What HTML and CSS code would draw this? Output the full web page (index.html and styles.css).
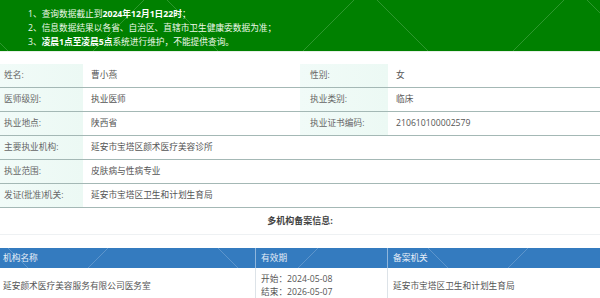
FILE: index.html
```html
<!DOCTYPE html>
<html lang="zh-CN">
<head>
<meta charset="utf-8">
<link rel="stylesheet" href="styles.css">
</head>
<body>
<div class="notice">
  <p>1、查询数据截止到<b>2024年12月1日22时</b>；</p>
  <p>2、信息数据结果以各省、自治区、直辖市卫生健康委数据为准；</p>
  <p>3、<b>凌晨1点至凌晨5点</b>系统进行维护，不能提供查询。</p>
</div>

<div class="info">
  <div class="lab">姓名:</div><div class="val">曹小燕</div>
  <div class="lab lab-r">性别:</div><div class="val">女</div>

  <div class="lab">医师级别:</div><div class="val">执业医师</div>
  <div class="lab lab-r">执业类别:</div><div class="val">临床</div>

  <div class="lab">执业地点:</div><div class="val">陕西省</div>
  <div class="lab lab-r">执业证书编码:</div><div class="val">210610100002579</div>

  <div class="lab">主要执业机构:</div><div class="val wide">延安市宝塔区颜术医疗美容诊所</div>
  <div class="lab">执业范围:</div><div class="val wide">皮肤病与性病专业</div>
  <div class="lab">发证(批准)机关:</div><div class="val wide">延安市宝塔区卫生和计划生育局</div>
</div>

<div class="subtitle">多机构备案信息:</div>

<div class="multi">
  <div class="head">
    <div class="hc c1">机构名称</div>
    <div class="hc c2">有效期</div>
    <div class="hc c3">备案机关</div>
  </div>
  <div class="row">
    <div class="dc c1">延安颜术医疗美容服务有限公司医务室</div>
    <div class="dc c2"><div>开始：2024-05-08</div><div>结束：2026-05-07</div></div>
    <div class="dc c3">延安市宝塔区卫生和计划生育局</div>
  </div>
</div>
</body>
</html>
```

FILE: styles.css
```css
* { box-sizing: border-box; }
html, body { margin: 0; padding: 0; background: #fff; }
body {
  font-family: "Open Sans", "Noto Sans CJK SC", sans-serif;
  font-size: 8.7px;
  color: #555;
  width: 600px;
  overflow: hidden;
}

.notice {
  height: 52px;
  background-color: #008000;
  background-image: url("data:image/svg+xml,%3Csvg xmlns='http://www.w3.org/2000/svg' width='210' height='52'%3E%3Cpath d='M0 52L52 0M75 0L127 52' stroke='%23ffffff' stroke-opacity='0.18' stroke-width='1' fill='none'/%3E%3C/svg%3E");
  background-position: 92px 0;
  background-repeat: repeat-x;
  padding: 7px 0 0 28px;
  color: #eef8ea;
  border-bottom: 1px solid #e8efe8;
}
.notice p { margin: 0; line-height: 14px; }
.notice b { font-weight: 700; color: #fff; }

.info {
  margin-top: 12px;
  display: grid;
  grid-template-columns: 83px 217px 88px 1fr;
}
.lab, .val {
  height: 24px;
  line-height: 23px;
  border-bottom: 1px solid #a4b8b5;
  white-space: nowrap;
}
.lab {
  background: linear-gradient(90deg, #f1fbf8, #ecf9f4);
  color: #666;
  padding-left: 4px;
}
.lab.lab-r { padding-left: 10px; }
.val { padding-left: 8px; }
.val.wide { grid-column: 2 / 5; }

.subtitle {
  text-align: center;
  font-weight: 700;
  font-size: 9px;
  color: #444;
  height: 27px;
  line-height: 26px;
  border-bottom: 1px solid #eef1f3;
}

.multi { margin-top: 13px; }
.head {
  display: grid;
  grid-template-columns: 256px 132px 1fr;
  height: 20px;
  background-color: #347bbf;
  background-image: url("data:image/svg+xml,%3Csvg xmlns='http://www.w3.org/2000/svg' width='210' height='20'%3E%3Cpath d='M0 20L20 0M130 0L150 20' stroke='%23ffffff' stroke-opacity='0.2' stroke-width='1' fill='none'/%3E%3C/svg%3E");
  background-position: 88px 0;
}
.hc {
  color: #e6eef8;
  line-height: 20px;
  padding-left: 3px;
  border-right: 1px solid #8fb6dc;
}
.hc.c2, .hc.c3 { padding-left: 5px; }
.hc.c3 { border-right: 0; }

.row {
  display: grid;
  grid-template-columns: 256px 132px 1fr;
  height: 40px;
}
.dc {
  border-right: 1px solid #dde3e8;
  padding-left: 3px;
  padding-top: 12px;
  line-height: 13px;
  white-space: nowrap;
}
.dc.c2 { padding-left: 5px; padding-top: 5px; }
.dc.c3 { padding-left: 5px; border-right: 0; }
```
